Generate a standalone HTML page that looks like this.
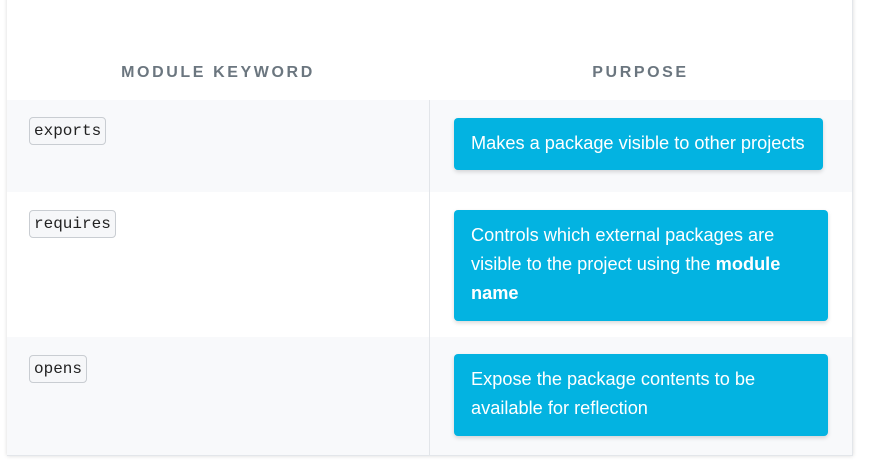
<!DOCTYPE html>
<html><head><style>
body{margin:0;width:869px;height:466px;background:#fff;font-family:"Liberation Sans",sans-serif;position:relative;overflow:hidden}
.card{position:absolute;left:7px;top:-10px;width:845px;height:465px;background:#fff;box-shadow:0 0 4px rgba(0,0,0,.15);border-right:1px solid #e3e6ea;border-bottom:1px solid #e3e6ea}
.h{position:absolute;top:64px;font-size:16px;font-weight:bold;letter-spacing:2.6px;color:#6b767f;text-align:center}
.row{position:absolute;left:7px;width:845px}
.div{position:absolute;left:429px;top:100px;width:1px;height:355px;background:#e2e5e9}
code{position:absolute;left:29px;font-family:"Liberation Mono","DejaVu Sans Mono",monospace;font-size:16px;color:#222;background:#f6f7f9;border:1px solid #c9cdd2;border-radius:4px;padding:3px 4px;line-height:20px}
.b{position:absolute;left:454px;background:#03b3e1;color:#fff;font-size:18.2px;line-height:29px;padding:11px 17px 10px;border-radius:4px;box-sizing:border-box;box-shadow:0 2px 4px rgba(0,0,0,.15)}
</style></head><body>
<div class="card"></div>
<div class="h" style="left:7px;width:422px">MODULE KEYWORD</div>
<div class="h" style="left:429px;width:423px">PURPOSE</div>
<div class="row" style="top:100px;height:92px;background:#f8f9fb"></div>
<div class="row" style="top:337px;height:118px;background:#f8f9fb"></div>
<div class="div"></div>
<code style="top:117px">exports</code>
<code style="top:210px">requires</code>
<code style="top:355px">opens</code>
<div class="b" style="top:118px;width:369px;height:52px;white-space:nowrap;padding-right:0">Makes a package visible to other projects</div>
<div class="b" style="top:210px;width:374px;height:111px">Controls which external packages are visible to the project using the <b>module name</b></div>
<div class="b" style="top:354px;width:374px;height:82px">Expose the package contents to be available for reflection</div>
</body></html>
